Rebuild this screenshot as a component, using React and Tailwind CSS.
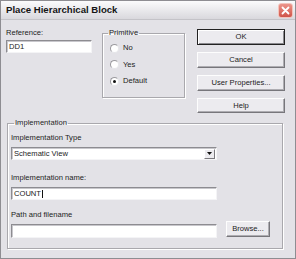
import React from 'react';

const Button = ({ children, primary, className = '' }) => (
  <div
    className={`flex items-center justify-center bg-[#ecebef] text-[7.6px] text-[#222] ${
      primary
        ? 'border border-[#222] shadow-[inset_1px_1px_0_#fff,inset_-1px_-1px_0_#8a898e]'
        : 'border border-t-[#fdfdfd] border-l-[#fdfdfd] border-r-[#77767b] border-b-[#77767b] shadow-[inset_-1px_-1px_0_#aeadb2]'
    } ${className}`}
  >
    {children}
  </div>
);

const Field = ({ children, className = '' }) => (
  <div
    className={`flex items-center bg-white border border-t-[#8d8c91] border-l-[#8d8c91] border-r-[#f4f4f6] border-b-[#f4f4f6] shadow-[inset_1px_1px_0_#c8c7cc] pl-[2px] text-[7.6px] text-[#222] ${className}`}
  >
    {children}
  </div>
);

const Radio = ({ label, checked }) => (
  <div className="flex items-center h-[12px] gap-[4px]">
    <div className="w-[9px] h-[9px] rounded-full bg-white border border-[#9a999e] border-b-[#e6e6e9] border-r-[#e6e6e9] flex items-center justify-center">
      {checked && <div className="w-[3px] h-[3px] rounded-full bg-[#111]" />}
    </div>
    <span className="text-[7.6px] text-[#222]">{label}</span>
  </div>
);

const Label = ({ children, className = '' }) => (
  <span className={`h-[10px] leading-[10px] text-[7.6px] text-[#222] ${className}`}>{children}</span>
);

export default function App() {
  return (
    <div
      className="w-[296px] h-[259px] bg-[#e3e2e7] border border-[#8e8d92] flex flex-col overflow-hidden"
      style={{ fontFamily: '"Liberation Sans", Arial, sans-serif' }}
    >
      {/* title bar */}
      <div className="h-[19px] shrink-0 flex items-center justify-between pl-[5px] pr-[2px] bg-gradient-to-b from-[#fbfbfc] to-[#d9d8dd] border-b border-[#c4c3c8]">
        <span className="text-[9.6px] font-bold text-[#151515]">Place Hierarchical Block</span>
        <div className="w-[15px] h-[15px] rounded-[3px] bg-gradient-to-b from-[#ec948a] to-[#cf5348] border border-[#f3c3bb] flex items-center justify-center">
          <svg width="9" height="9" viewBox="0 0 9 9">
            <path d="M1.5 1.5 L7.5 7.5 M7.5 1.5 L1.5 7.5" stroke="#fff" strokeWidth="1.8" strokeLinecap="round" />
          </svg>
        </div>
      </div>

      <div className="flex-1 flex flex-col px-[5px] pt-[8px]">
        {/* top row */}
        <div className="flex items-start">
          <div className="flex flex-col w-[86px]">
            <Label>Reference:</Label>
            <Field className="mt-[2px] h-[13px]">DD1</Field>
          </div>

          <fieldset className="ml-[10px] w-[83px] h-[70px] border border-[#a9a8ad] shadow-[inset_1px_1px_0_#fff,1px_1px_0_#fff] pl-[7px]">
            <legend className="ml-[-2px] px-[1px] h-[10px] leading-[10px] text-[7.6px] text-[#222]">Primitive</legend>
            <div className="flex flex-col gap-[4.5px] mt-[4px]">
              <Radio label="No" />
              <Radio label="Yes" />
              <Radio label="Default" checked />
            </div>
          </fieldset>

          <div className="ml-[12px] w-[88px] flex flex-col gap-[7px] mt-[1px]">
            <Button primary className="h-[16px]">OK</Button>
            <Button className="h-[16px]">Cancel</Button>
            <Button className="h-[16px]">User Properties...</Button>
            <Button className="h-[15px]">Help</Button>
          </div>
        </div>

        {/* implementation group */}
        <fieldset className="mt-[5px] ml-[1px] w-[276px] h-[131px] border border-[#a9a8ad] shadow-[inset_1px_1px_0_#fff,1px_1px_0_#fff] pl-[3px]">
          <legend className="ml-[3px] px-[1px] h-[10px] leading-[10px] text-[7.6px] text-[#222]">Implementation</legend>
          <div className="flex flex-col">
            <Label className="mt-[5px]">Implementation Type</Label>
            <Field className="mt-[4px] h-[13px] w-[206px] justify-between pr-[1px]">
              <span>Schematic View</span>
              <div className="w-[11px] h-[10px] bg-[#ecebef] border border-t-[#fff] border-l-[#fff] border-r-[#7a797e] border-b-[#7a797e] flex items-center justify-center">
                <svg width="5" height="3" viewBox="0 0 5 3">
                  <path d="M0 0 H5 L2.5 3 Z" fill="#111" />
                </svg>
              </div>
            </Field>
            <Label className="mt-[13px]">Implementation name:</Label>
            <Field className="mt-[4px] h-[13px] w-[206px]">
              <span>COUNT</span>
              <span className="w-px h-[8px] bg-[#111] ml-[1px]" />
            </Field>
            <Label className="mt-[10px]">Path and filename</Label>
            <div className="flex items-start mt-[1px]">
              <Field className="mt-[3px] h-[14px] w-[206px]" />
              <Button className="ml-[9px] w-[44px] h-[16px]">Browse...</Button>
            </div>
          </div>
        </fieldset>
      </div>
    </div>
  );
}
